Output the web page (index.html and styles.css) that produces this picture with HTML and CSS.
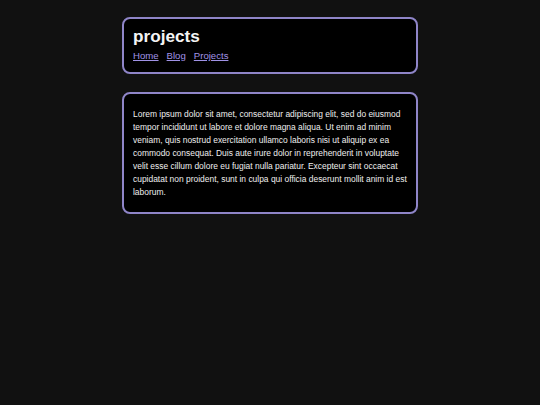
FILE: index.html
```html
<!DOCTYPE html>
<html lang="en">
<head>
<meta charset="utf-8">
<title>projects</title>
<link rel="stylesheet" href="styles.css">
</head>
<body>
<main class="wrap">
  <header class="card header">
    <h1 class="title">projects</h1>
    <nav class="nav">
      <a href="#">Home</a>
      <a href="#">Blog</a>
      <a href="#">Projects</a>
    </nav>
  </header>
  <section class="card body-card">
    <p class="text">Lorem ipsum dolor sit amet, consectetur adipiscing elit, sed do eiusmod tempor incididunt ut labore et dolore magna aliqua. Ut enim ad minim veniam, quis nostrud exercitation ullamco laboris nisi ut aliquip ex ea commodo consequat. Duis aute irure dolor in reprehenderit in voluptate velit esse cillum dolore eu fugiat nulla pariatur. Excepteur sint occaecat cupidatat non proident, sunt in culpa qui officia deserunt mollit anim id est laborum.</p>
  </section>
</main>
</body>
</html>
```
FILE: styles.css
```css
html, body {
  margin: 0;
  padding: 0;
  background: #111111;
}
body {
  font-family: "Liberation Sans", Arial, sans-serif;
  color: #ffffff;
}
.wrap {
  width: 296px;
  margin: 17px auto 0;
  display: flex;
  flex-direction: column;
  gap: 18px;
}
.card {
  background: #000000;
  border: 2px solid #8f85c8;
  border-radius: 8px;
}
.header {
  padding: 7px 9px 10px;
}
.title {
  margin: 0;
  font-size: 17.2px;
  line-height: 20px;
  font-weight: bold;
  color: #f4f4f4;
}
.nav {
  display: flex;
  gap: 8px;
  margin-top: 4px;
  font-size: 9.6px;
  line-height: 12px;
}
.nav a {
  color: #a193e6;
  text-decoration: underline;
}
.body-card {
  padding: 14px 8px 13px 9px;
}
.text {
  margin: 0;
  font-size: 8.45px;
  line-height: 13px;
  color: #eeeeee;
}
```
